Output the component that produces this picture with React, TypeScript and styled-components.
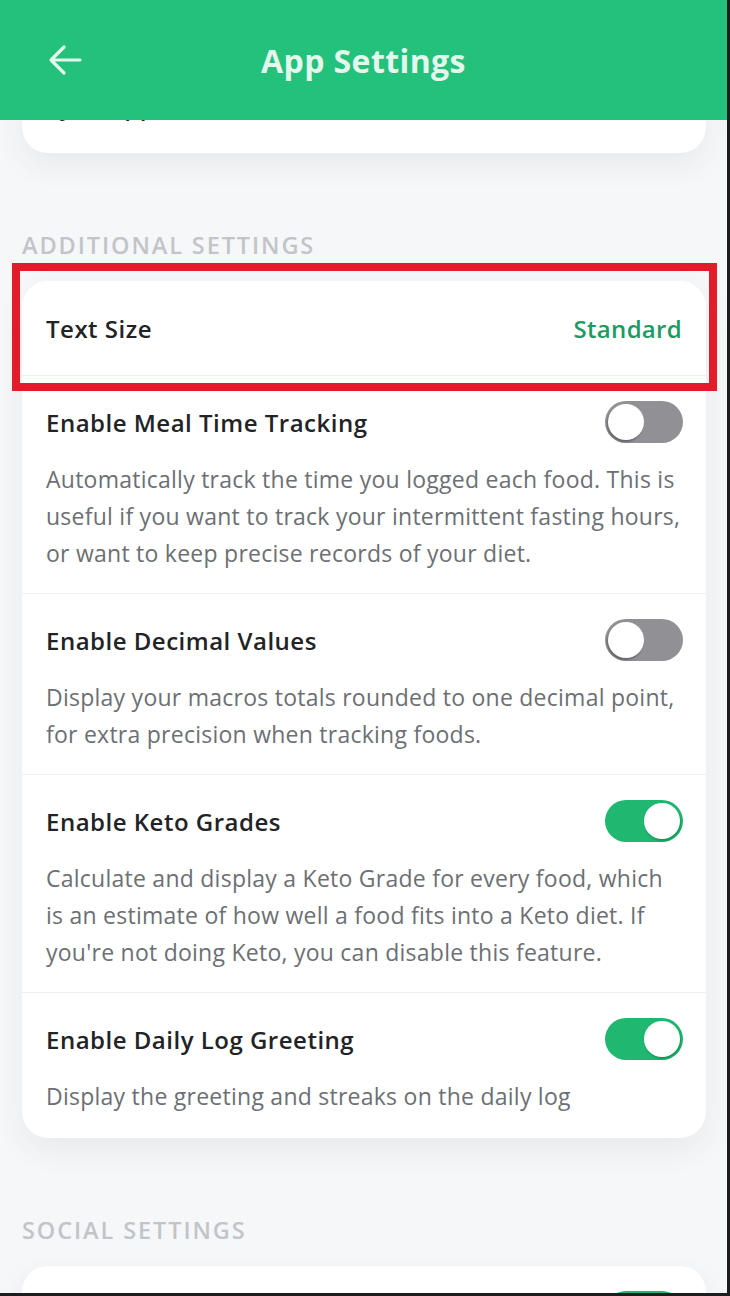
import styled, { createGlobalStyle } from 'styled-components'

const GlobalStyle = createGlobalStyle`
  html, body {
    margin: 0;
    padding: 0;
    overflow: hidden;
    background: #f6f7f8;
  }
  * {
    box-sizing: border-box;
  }
`;

const Page = styled.div`
  position: relative;
  width: 730px;
  height: 1296px;
  overflow: hidden;
  background: #f6f7f8;
  font-family: 'Open Sans', Lato, sans-serif;
  border-right: 3px solid #1d1d1f;
  border-bottom: 3px solid #1d1d1f;
`;

const Header = styled.header`
  position: relative;
  z-index: 2;
  height: 120px;
  background: #23c17b;
  display: flex;
  align-items: center;
  justify-content: center;
`;

const BackButton = styled.button`
  position: absolute;
  left: 46px;
  top: 42px;
  width: 38px;
  height: 36px;
  padding: 0;
  border: none;
  background: none;
  display: flex;
  align-items: center;
  justify-content: center;
`;

const Title = styled.h1`
  margin: 0;
  font-size: 32px;
  font-weight: 700;
  letter-spacing: 0.4px;
  color: #e4f7ec;
`;

const Content = styled.main`
  margin-top: -62px;
  padding: 0 21px 0 22px;
  display: flex;
  flex-direction: column;
`;

const Section = styled.section<{ $first?: boolean }>`
  position: relative;
  margin-top: ${({ $first }) => ($first ? '0' : '78px')};
`;

const SectionLabel = styled.h2`
  margin: 0 0 22px;
  height: 28px;
  line-height: 28px;
  font-size: 23.5px;
  font-weight: 600;
  letter-spacing: 1.9px;
  color: #c1c5c9;
  text-transform: uppercase;
`;

const Card = styled.div`
  background: #ffffff;
  border-radius: 26px;
  box-shadow: 0 12px 30px rgba(40, 50, 60, 0.07);
  overflow: hidden;
`;

const ValueRow = styled.div`
  height: 95px;
  padding: 0 24px;
  display: flex;
  align-items: center;
  justify-content: space-between;
  border-bottom: 1px solid #eceef0;

  &:last-child {
    border-bottom: none;
  }
`;

const ToggleRow = styled.div`
  padding: 24px 24px 21px;
  border-bottom: 1px solid #eceef0;

  &:last-child {
    border-bottom: none;
    padding-bottom: 23px;
  }
`;

const RowHead = styled.div`
  height: 44px;
  display: flex;
  align-items: center;
  justify-content: space-between;
`;

const RowTitle = styled.span`
  font-size: 24px;
  font-weight: 600;
  letter-spacing: 0.5px;
  color: #222326;
`;

const RowValue = styled.span`
  font-size: 24px;
  font-weight: 600;
  letter-spacing: 0.3px;
  color: #1d9b63;
`;

const RowText = styled.p`
  margin: 17px 0 0;
  font-size: 23px;
  line-height: 37px;
  letter-spacing: 0.25px;
  color: #6c6f73;
`;

const Track = styled.div<{ $on: boolean }>`
  position: relative;
  width: 78px;
  height: 42px;
  margin-right: -1px;
  border-radius: 21px;
  background: ${({ $on }) => ($on ? '#20b870' : '#909095')};
  flex-shrink: 0;
`;

const Knob = styled.div<{ $on: boolean }>`
  position: absolute;
  top: 3px;
  left: ${({ $on }) => ($on ? '39px' : '3px')};
  width: 36px;
  height: 36px;
  border-radius: 50%;
  background: #ffffff;
  box-shadow: ${({ $on }) =>
    $on ? '1px 2px 2px rgba(0, 90, 50, 0.35)' : '-1px 2px 2px rgba(0, 0, 0, 0.3)'};
`;

const Highlight = styled.div`
  position: absolute;
  left: -10px;
  right: -11px;
  top: 32px;
  height: 128px;
  border: 8px solid #e21d2a;
  pointer-events: none;
`;

function BackArrow() {
  return (
    <svg width="36" height="34" viewBox="0 0 36 34" fill="none">
      <path
        d="M33 17H4M17 4L4 17L17 30"
        stroke="#e4f7ec"
        strokeWidth="3.2"
        strokeLinecap="round"
        strokeLinejoin="round"
      />
    </svg>
  )
}

function Toggle({ on }: { on: boolean }) {
  return (
    <Track $on={on}>
      <Knob $on={on} />
    </Track>
  )
}

interface Setting {
  title: string
  text: string
  on: boolean
}

const additional: Setting[] = [
  {
    title: 'Enable Meal Time Tracking',
    text: 'Automatically track the time you logged each food. This is useful if you want to track your intermittent fasting hours, or want to keep precise records of your diet.',
    on: false,
  },
  {
    title: 'Enable Decimal Values',
    text: 'Display your macros totals rounded to one decimal point, for extra precision when tracking foods.',
    on: false,
  },
  {
    title: 'Enable Keto Grades',
    text: "Calculate and display a Keto Grade for every food, which is an estimate of how well a food fits into a Keto diet. If you're not doing Keto, you can disable this feature.",
    on: true,
  },
  {
    title: 'Enable Daily Log Greeting',
    text: 'Display the greeting and streaks on the daily log',
    on: true,
  },
]

export default function App() {
  return (
    <>
      <GlobalStyle />
      <Page>
        <Header>
          <BackButton aria-label="Back">
            <BackArrow />
          </BackButton>
          <Title>App Settings</Title>
        </Header>
        <Content>
          <Section $first>
            <Card>
              <ValueRow>
                <RowTitle>Sync Apple Health</RowTitle>
              </ValueRow>
            </Card>
          </Section>

          <Section>
            <SectionLabel>Additional Settings</SectionLabel>
            <Card>
              <ValueRow>
                <RowTitle>Text Size</RowTitle>
                <RowValue>Standard</RowValue>
              </ValueRow>
              {additional.map((s) => (
                <ToggleRow key={s.title}>
                  <RowHead>
                    <RowTitle>{s.title}</RowTitle>
                    <Toggle on={s.on} />
                  </RowHead>
                  <RowText>{s.text}</RowText>
                </ToggleRow>
              ))}
            </Card>
            <Highlight />
          </Section>

          <Section>
            <SectionLabel>Social Settings</SectionLabel>
            <Card>
              <ToggleRow>
                <RowHead>
                  <RowTitle>Show Public Profile</RowTitle>
                  <Toggle on />
                </RowHead>
              </ToggleRow>
            </Card>
          </Section>
        </Content>
      </Page>
    </>
  )
}
